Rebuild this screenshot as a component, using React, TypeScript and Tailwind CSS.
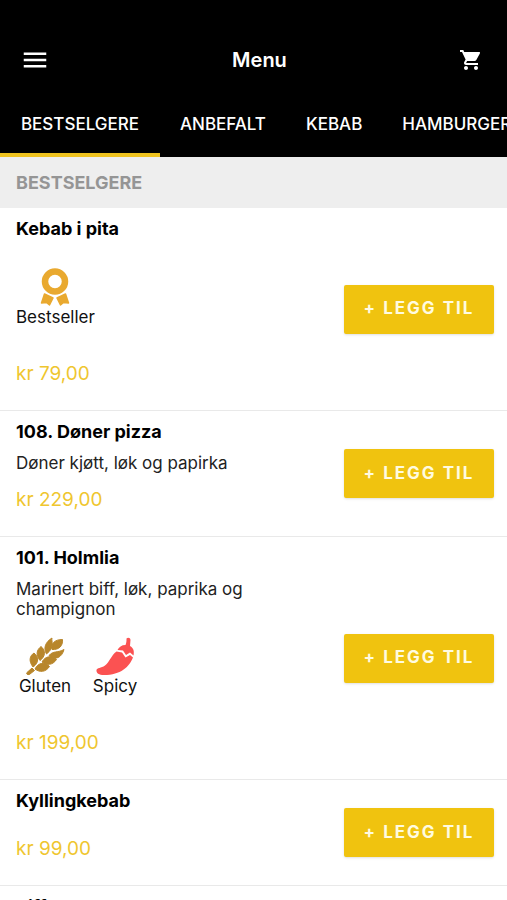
import React from "react";
import { MdMenu, MdShoppingCart } from "react-icons/md";

type TagKind = "bestseller" | "gluten" | "spicy";

interface MenuItem {
  name: string;
  description?: string;
  tags?: TagKind[];
  price: string;
}

const TABS = ["Bestselgere", "Anbefalt", "Kebab", "Hamburger"];

const ITEMS: MenuItem[] = [
  { name: "Kebab i pita", tags: ["bestseller"], price: "kr 79,00" },
  { name: "108. Døner pizza", description: "Døner kjøtt, løk og papirka", price: "kr 229,00" },
  {
    name: "101. Holmlia",
    description: "Marinert biff, løk, paprika og champignon",
    tags: ["gluten", "spicy"],
    price: "kr 199,00",
  },
  { name: "Kyllingkebab", price: "kr 99,00" },
  { name: "Biffkebab", price: "kr 109,00" },
];

function RibbonIcon() {
  return (
    <svg viewBox="0 0 40 40" className="size-10" aria-hidden="true">
      <circle cx="20" cy="14.500" r="10" fill="none" stroke="#e9a92f" strokeWidth="6.5" />
      <path
        d="M9.500 27l8.500 4-3.500 7-3-2.500-5 .5z"
        fill="#e9a92f"
        stroke="#e9a92f"
        strokeWidth="1.5"
        strokeLinejoin="round"
      />
      <path
        d="M30.500 27l-8.500 4 3.500 7 3-2.500 5 .5z"
        fill="#e9a92f"
        stroke="#e9a92f"
        strokeWidth="1.5"
        strokeLinejoin="round"
      />
    </svg>
  );
}

function WheatIcon() {
  return (
    <svg viewBox="0 0 40 40" className="size-10" aria-hidden="true">
      <g fill="#b8862b" stroke="#b8862b" strokeWidth="1" strokeLinejoin="round">
        <path d="M2 36.500L7 32l2.500 2.500L5 38c-1.500 1.500-4.500 0-3-1.500z" />
        <path d="M8 31C3.500 25 4.500 20 9 17c5 4 5 10-1 14z" />
        <path d="M15 24.500C10.500 19 11.500 14 16 10.500c5 4 4.500 10-1 14z" />
        <path d="M21.500 18C18 12 20.500 6 27 2c-1 3 3.500 9-5.500 16z" />
        <path d="M10 33c3-6.500 10-7.500 14.500-2.500-4 6-10 6-14.500 2.500z" />
        <path d="M17 26c3-6 10-7 14.500-2.500-4 6-10 6-14.500 2.500z" />
        <path d="M24 19.500c4-5 9-2.500 15-6-2 8-9 11.500-15 6z" />
        <path d="M27 13.500C26 7 30 3.500 37.500 3.500 38 10 34 14 27 13.500z" />
      </g>
    </svg>
  );
}

function ChiliIcon() {
  return (
    <svg viewBox="0 0 40 40" className="size-10" aria-hidden="true">
      <g fill="#fb5252">
        <path d="M31.500 2.500c1.500-1.500 4-.5 4 1.500L35 10c3.500 2 4.500 5 3.500 9.500L35 16.500l-4 2.500-3-4.500-5.500-.5c1.500-3 4-5 8-5 1-2.500 1-4 1-6.500z" />
        <path d="M21.500 15.500l5.500 1 3.500 5 4.500-2.500 3 2.500C34 31 26 39 9 39c-5 0-8-2-7.500-5 .5-2.500 4.500-1.500 8.500-4.500 5-4 6-10 11.500-14z" />
      </g>
    </svg>
  );
}

const TAGS = {
  bestseller: { label: "Bestseller", Icon: RibbonIcon },
  gluten: { label: "Gluten", Icon: WheatIcon },
  spicy: { label: "Spicy", Icon: ChiliIcon },
};

function MenuRow({ item }: { item: MenuItem }) {
  return (
    <li className="flex items-center justify-between border-b border-[#e9e9e9] pr-[13px] pl-4">
      <div className="flex w-60 flex-col pt-[10px] pb-6">
        <h3 className="text-lg leading-[22px] font-bold text-black">{item.name}</h3>
        <p className="mt-[10px] text-[17px] leading-5 text-[#222]">{item.description}</p>
        {item.tags && (
          <ul className="mt-[17px] mb-[19px] flex gap-3">
            {item.tags.map((tag) => {
              const { label, Icon } = TAGS[tag];
              return (
                <li key={tag} className="flex min-w-[58px] flex-col items-center">
                  <Icon />
                  <span className="text-[17px] leading-[21px] text-[#111]">{label}</span>
                </li>
              );
            })}
          </ul>
        )}
        <p className="mt-[15px] text-[19px] leading-6 text-[#efc62f]">{item.price}</p>
      </div>
      <button
        type="button"
        aria-label={`+ Legg til ${item.name}`}
        className="h-[49px] w-[150px] shrink-0 rounded-xs bg-[#f0c30f] text-[17px] font-bold tracking-[2px] text-[#fffbe0] uppercase shadow"
      >
        + Legg til
      </button>
    </li>
  );
}

export default function App() {
  return (
    <div className="h-screen overflow-hidden bg-white font-['Inter',sans-serif]">
      <header className="bg-black pt-[30px] text-white">
        <div className="grid h-[60px] grid-cols-[1fr_auto_1fr] items-center pr-2 pl-5">
          <button type="button" aria-label="Open navigation" className="justify-self-start">
            <MdMenu size={30} />
          </button>
          <h1 className="text-xl font-semibold">Menu</h1>
          <button type="button" aria-label="Shopping cart" className="mr-4 justify-self-end">
            <MdShoppingCart size={24} />
          </button>
        </div>
        <nav className="flex overflow-hidden">
          {TABS.map((tab, i) => (
            <a
              key={tab}
              href={`#${tab.toLowerCase()}`}
              aria-current={i === 0 ? "page" : undefined}
              className={`flex h-[67px] shrink-0 items-center justify-center border-b-4 px-5 pt-1.5 text-[17px] font-medium uppercase ${
                i === 0 ? "min-w-40 border-[#efc31f]" : "border-transparent"
              }`}
            >
              {tab}
            </a>
          ))}
        </nav>
      </header>
      <main>
        <h2 className="flex h-[51px] items-center bg-[#eee] px-4 text-lg font-bold text-[#959595] uppercase">
          Bestselgere
        </h2>
        <ul>
          {ITEMS.map((item) => (
            <MenuRow key={item.name} item={item} />
          ))}
        </ul>
      </main>
    </div>
  );
}
